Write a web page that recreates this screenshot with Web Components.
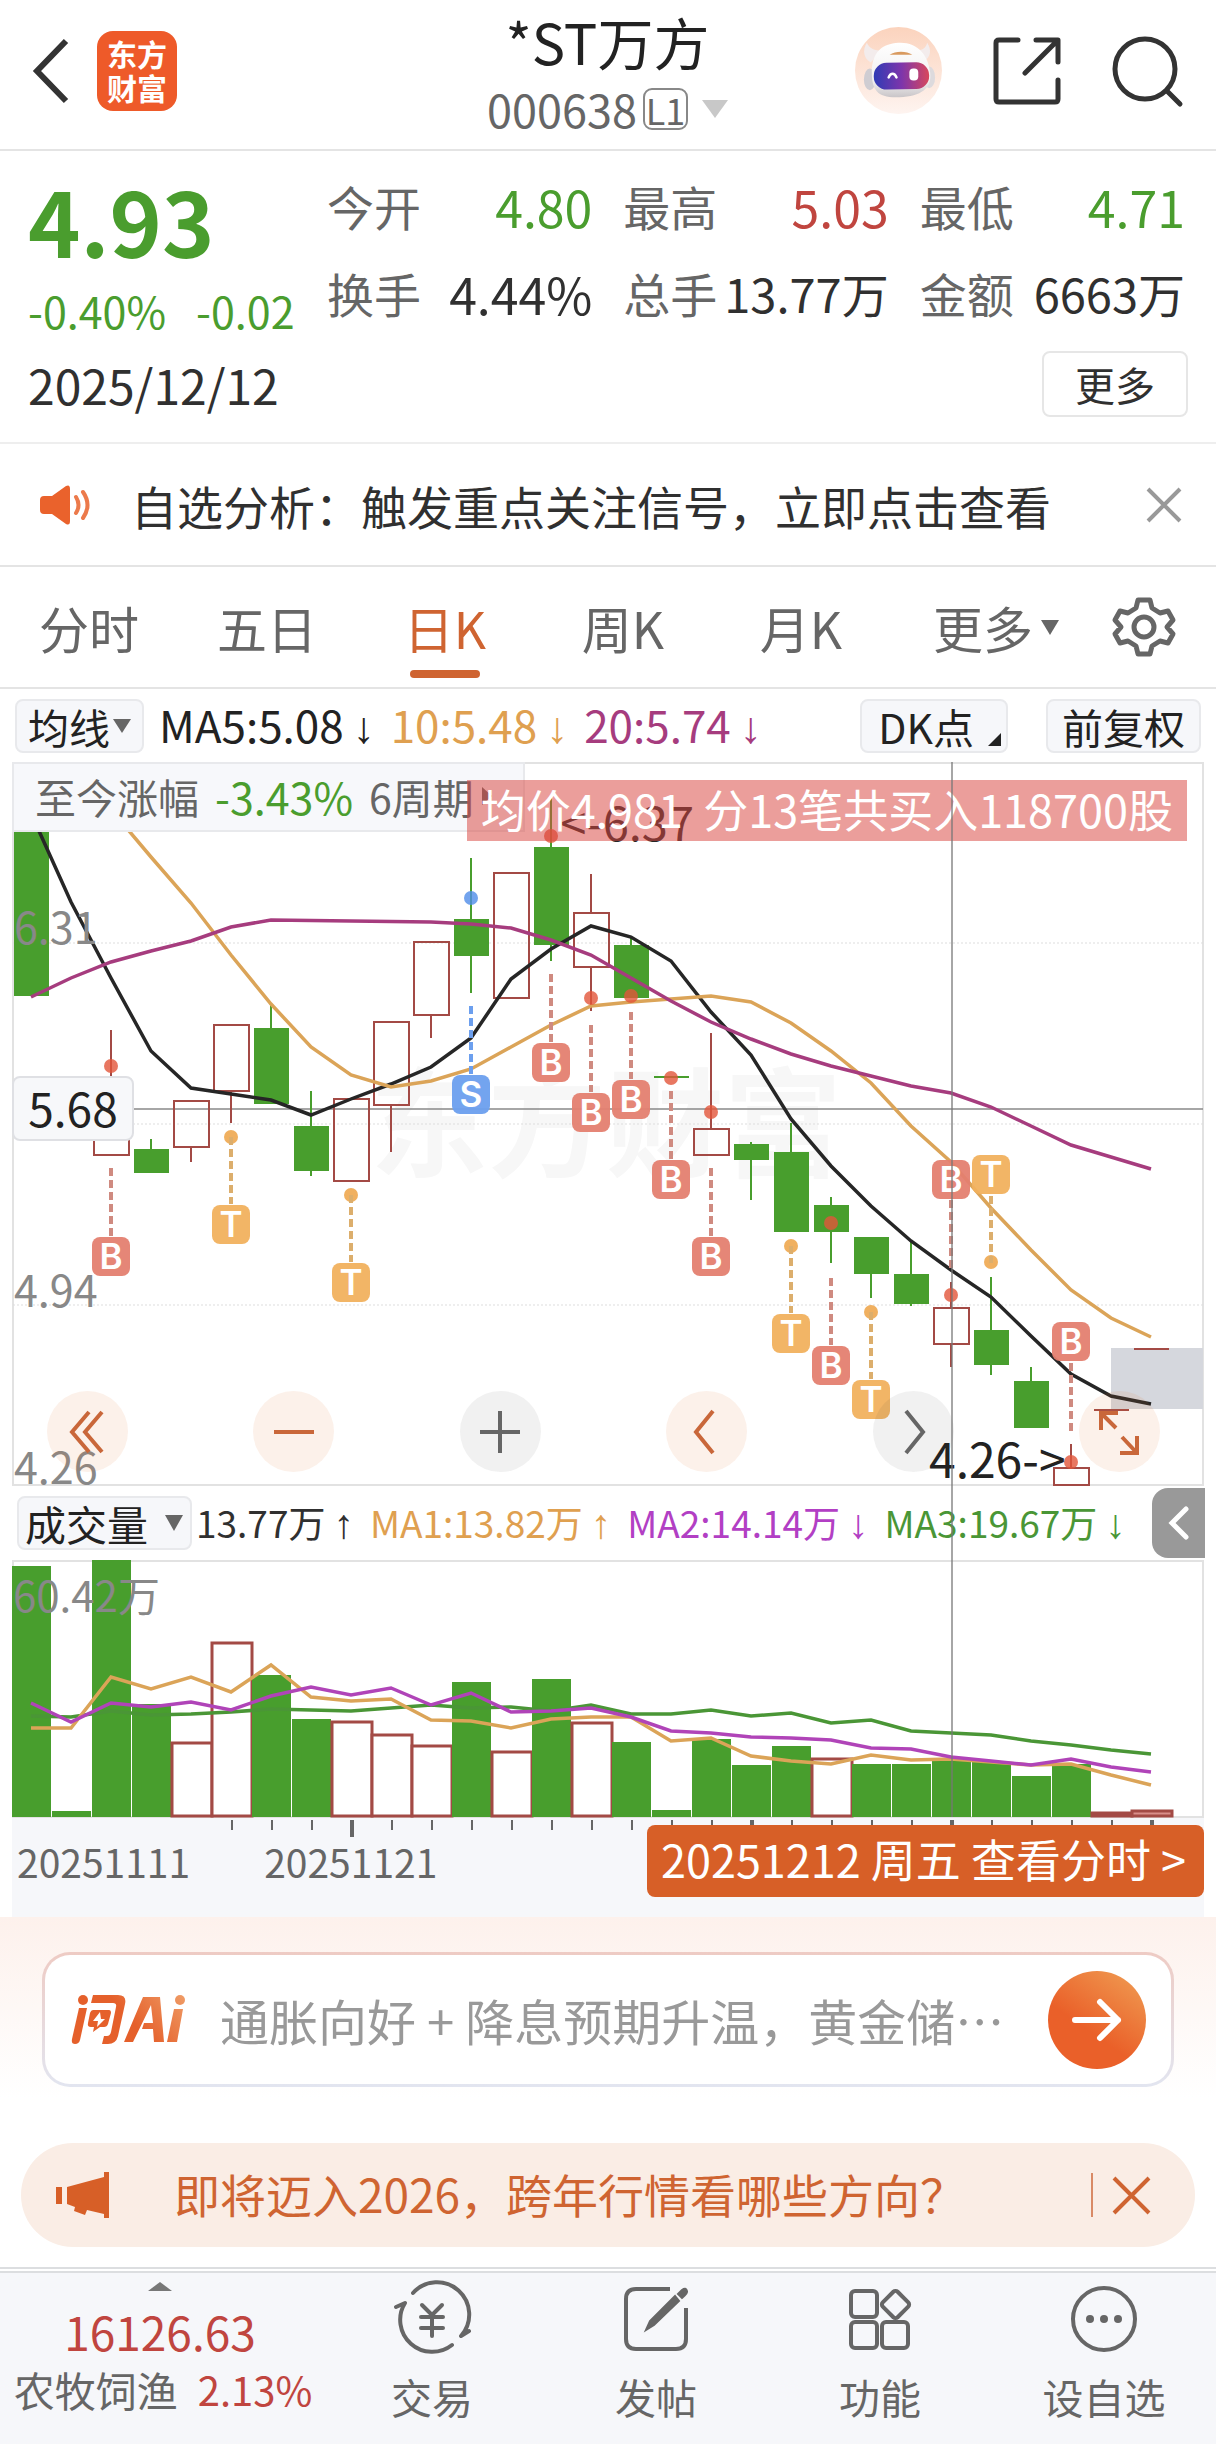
<!DOCTYPE html>
<html lang="zh-CN">
<head>
<meta charset="utf-8">
<meta name="viewport" content="width=device-width, initial-scale=1">
<title>*ST万方 000638</title>
<style>
  :root {
    --ink: #303030; --sub: #666; --up: #c0453f; --down: #4a9d2e; --brand: #cf6431;
    --ma10: #dfa050; --ma20: #a63c7e; --vol2: #b23fc4; --vol3: #4a9636;
    --line: #e4e4e4; --panel: #f6f7fa;
  }
  body { margin: 0; background: #fff; color: var(--ink); font-family: "Noto Sans CJK SC", sans-serif; }
</style>
</head>
<body>
<stock-app></stock-app>
<script>
const RESET = `
  :host, *, *::before, *::after { box-sizing: border-box; }
  :host { display: block; fill: none; stroke: currentColor; }
  button { font: inherit; color: inherit; background: none; border: 0; padding: 0; margin: 0; white-space: nowrap; }
  svg { display: block; overflow: visible; flex: none; }
  p, h1 { margin: 0; font-weight: 400; }
  .arr { font-family: "Liberation Sans", sans-serif; }
`;
const define = (name, css, html) => customElements.define(name, class extends HTMLElement {
  constructor() {
    super();
    const t = document.createElement('template');
    t.innerHTML = `<style>${RESET}${css}</style>${html}`;
    this.attachShadow({ mode: 'open' }).append(t.content.cloneNode(true));
  }
});

/* ---------- header ---------- */
define('app-header', `
  :host { border-bottom: 2px solid var(--line); }
  header { display: grid; grid-template-columns: 1fr auto 1fr; align-items: center; height: 149px; padding: 0 34px 8px 33px; }
  .left { display: flex; align-items: center; gap: 30px; }
  .right { display: flex; align-items: center; justify-content: flex-end; gap: 51px; }
  .logo { width: 80px; height: 80px; border-radius: 16px; background: #ee5a29; color: #fff; font-weight: 700;
    font-size: 30px; line-height: 34px; text-align: center; padding-top: 5px; }
  .mid { display: flex; flex-direction: column; align-items: center; gap: 16px; }
  h1 { font-size: 56px; line-height: 60px; color: #222; }
  .code { display: flex; align-items: center; gap: 6px; font-size: 45px; line-height: 44px; color: var(--sub); }
  .lv { border: 2px solid #888; border-radius: 9px; font-size: 36px; line-height: 38px; width: 45px; text-align: center; }
  .tri { margin-left: 8px; border: 13px solid transparent; border-top: 18px solid #c8c8c8; border-bottom: 0; }
`, `
  <header>
    <div class="left">
      <button aria-label="返回"><svg width="34" height="62" viewBox="0 0 34 62" stroke="#333" stroke-width="6"><path d="M33 1 4 31 33 61"/></svg></button>
      <div class="logo">东方<br>财富</div>
    </div>
    <div class="mid">
      <h1>*ST万方</h1>
      <div class="code"><span>000638</span><span class="lv">L1</span><i class="tri"></i></div>
    </div>
    <div class="right">
      <button aria-label="助手"><svg width="87" height="87" viewBox="0 0 88 88" stroke="none">
        <defs>
          <linearGradient id="bg" x2="0" y2="1"><stop offset="0" stop-color="#fbd3bd"/><stop offset="1" stop-color="#fef4f0"/></linearGradient>
          <linearGradient id="vi"><stop offset="0" stop-color="#2f3bb5"/><stop offset=".5" stop-color="#7d35ab"/><stop offset="1" stop-color="#d8475c"/></linearGradient>
          <linearGradient id="he" x2="0" y2="1"><stop offset="0" stop-color="#fff"/><stop offset=".7" stop-color="#f1efef"/><stop offset="1" stop-color="#c9c5c8"/></linearGradient>
        </defs>
        <circle cx="44" cy="44" r="44" fill="url(#bg)"/>
        <path d="M12 16c-5 8-3 16 4 20l10-12c-7 0-12-3-14-8ZM73 16c5 8 3 14-2 18L62 24c6 0 10-3 11-8Z" fill="#f3ecec"/>
        <ellipse cx="15" cy="53" rx="6" ry="11" fill="#cfcdd2"/><ellipse cx="75" cy="51" rx="6" ry="11" fill="#dddadd"/>
        <path d="M17 46c0-20 10-29 27-30 19-1 30 12 32 30 2 16-9 24-31 25S17 64 17 46Z" fill="url(#he)"/>
        <rect x="19" y="36" width="56" height="27" rx="13" fill="url(#vi)" transform="rotate(-1 47 50)"/>
        <path d="M35 28c6-4 17-4 23 0Z" fill="#d99a5f"/>
        <path d="M34 51c2-5 6-5 8 0" fill="none" stroke="#fff" stroke-width="2.5" stroke-linecap="round"/>
        <rect x="55" y="42" width="9" height="12" rx="4" fill="#fff"/>
      </svg></button>
      <button aria-label="分享"><svg width="68" height="68" viewBox="0 0 68 68" stroke="#333" stroke-width="5" stroke-linecap="round" stroke-linejoin="round"><path d="M25 3H6q-3 0-3 3v56q0 3 3 3h56q3 0 3-3V43M43 3h22v22M64 4 32 36"/></svg></button>
      <button aria-label="搜索"><svg width="70" height="70" viewBox="0 0 70 70" stroke="#333" stroke-width="5" stroke-linecap="round"><circle cx="33" cy="33" r="30"/><path d="M55 55 68 68"/></svg></button>
    </div>
  </header>`);

/* ---------- quote ---------- */
define('quote-item', `
  :host { display: flex; justify-content: space-between; align-items: center; font-size: 47px; line-height: 64px; white-space: nowrap; }
  :host([big]) .v { font-size: 50px; }
  .k { color: var(--sub); }
`, `<span class="k"><slot name="k"></slot></span><span class="v"><slot></slot></span>`);

define('quote-panel', `
  :host { border-bottom: 2px solid #eee; padding: 23px 31px 25px 28px; }
  .top { display: grid; grid-template-columns: 268px repeat(3, 1fr); column-gap: 31px; align-items: start; }
  .price { font-size: 89px; line-height: 92px; font-weight: 700; color: var(--down); }
  .chg { display: flex; gap: 30px; font-size: 43px; line-height: 64px; color: var(--down); white-space: nowrap; }
  .col { display: grid; row-gap: 23px; }
  .main { display: grid; row-gap: 12px; }
  .down { color: var(--down); } .up { color: var(--up); }
  .bot { display: flex; justify-content: space-between; align-items: center; margin-top: 9px; }
  .date { font-size: 48px; line-height: 66px; }
  .more { width: 146px; height: 66px; border: 2px solid #e6e6e6; border-radius: 8px; font-size: 40px; line-height: 58px; margin-right: -3px; }
`, `
  <div class="top">
    <div class="main"><div class="price">4.93</div><div class="chg"><span>-0.40%</span><span>-0.02</span></div></div>
    <div class="col"><quote-item big class="down"><span slot="k">今开</span>4.80</quote-item><quote-item big><span slot="k">换手</span>4.44%</quote-item></div>
    <div class="col"><quote-item big class="up"><span slot="k">最高</span>5.03</quote-item><quote-item><span slot="k">总手</span>13.77万</quote-item></div>
    <div class="col"><quote-item big class="down"><span slot="k">最低</span>4.71</quote-item><quote-item><span slot="k">金额</span>6663万</quote-item></div>
  </div>
  <div class="bot"><span class="date">2025/12/12</span><button class="more">更多</button></div>`);

/* ---------- signal notice ---------- */
define('signal-notice', `
  :host { display: flex; align-items: center; height: 123px; padding: 0 35px 0 40px; border-bottom: 2px solid var(--line); }
  p { flex: 1; margin-left: 39px; font-size: 46px; line-height: 60px; white-space: nowrap; }
`, `
  <svg width="52" height="42" viewBox="0 0 52 42"><path d="M4 12h8L26 2q4-2 4 3v32q0 5-4 3L12 30H4q-4 0-4-4V16q0-4 4-4Z" fill="#ea622c" stroke="none"/><path d="M36 13q5 8 0 16M43 8q9 13 0 26" stroke="#ec7a4b" stroke-width="4" stroke-linecap="round"/></svg>
  <p>自选分析：触发重点关注信号，立即点击查看</p>
  <button aria-label="关闭"><svg width="34" height="34" viewBox="0 0 34 34" stroke="#999" stroke-width="4"><path d="M1 1 33 33M33 1 1 33"/></svg></button>`);

/* ---------- period tabs ---------- */
define('period-tabs', `
  :host { border-bottom: 2px solid var(--line); }
  nav { display: grid; grid-template-columns: repeat(5, 178fr) 212fr 84fr; padding-right: 30px; height: 120px; color: var(--sub); }
  button { display: flex; align-items: center; justify-content: center; gap: 8px; font-size: 50px; line-height: 72px; position: relative; }
  .on { color: var(--brand); }
  .on::after { content: ""; position: absolute; left: 50%; margin-left: -35px; bottom: 9px; width: 70px; height: 8px; border-radius: 4px; background: var(--brand); }
  .tri { border: 9px solid transparent; border-top: 15px solid var(--sub); border-bottom: 0; }
`, `
  <nav>
    <button>分时</button><button>五日</button><button class="on">日K</button><button>周K</button><button>月K</button>
    <button>更多<i class="tri"></i></button>
    <button aria-label="设置"><svg width="60" height="60" viewBox="0 0 60 60" stroke-width="5" stroke-linejoin="round"><path d="M24 3h12l2 8 8 5 8-2 5 9-6 7 6 7-5 9-8-2-8 5-2 8H24l-2-8-8-5-8 2-5-9 6-7-6-7 5-9 8 2 8-5Z"/><circle cx="30" cy="30" r="10"/></svg></button>
  </nav>`);

/* ---------- moving average bar ---------- */
define('ma-bar', `
  :host { display: flex; align-items: center; height: 73px; padding: 0 15px; font-size: 41px; line-height: 52px; white-space: nowrap; color: #222; }
  .tag { display: flex; align-items: center; height: 54px; border: 2px solid #e8e9ec; border-radius: 8px; background: var(--panel); padding: 0 14px; position: relative; }
  .pick { padding: 0 11px; gap: 3px; }
  .tri { border: 9px solid transparent; border-top: 14px solid #666; border-bottom: 0; }
  .vals { flex: 1; display: flex; gap: 16px; margin-left: 15px; font-size: 44px; }
  .vals .arr { margin-left: 9px; }
  .dk { padding: 0 32px 0 16px; margin-right: 38px; }
  .dk::after { content: ""; position: absolute; right: 5px; bottom: 5px; border-left: 13px solid transparent; border-bottom: 13px solid #222; }
`, `
  <button class="tag pick">均线<i class="tri"></i></button>
  <div class="vals">
    <span>MA5:5.08<span class="arr">↓</span></span>
    <span style="color:var(--ma10)">10:5.48<span class="arr">↓</span></span>
    <span style="color:var(--ma20)">20:5.74<span class="arr">↓</span></span>
  </div>
  <button class="tag dk">DK点</button>
  <button class="tag">前复权</button>`);

/* ---------- chart data, in drawing units; one candle every 40 units ---------- */
const X0 = 31, STEP = 40, cx = i => X0 + STEP * i;
// [index, kind, high, bodyTop, bodyBottom, low]
const CANDLES = [
  [0,'g',800,800,996,996],[2,'r',1030,1100,1155,1155],[3,'g',1139,1149,1173,1173],[4,'r',1101,1101,1147,1162],
  [5,'r',1025,1025,1091,1123],[6,'g',1004,1028,1104,1104],[7,'g',1091,1126,1171,1176],[8,'r',1099,1099,1181,1181],
  [9,'r',1022,1022,1105,1152],[10,'r',942,942,1015,1038],[11,'g',858,919,956,993],[12,'r',873,873,998,998],
  [13,'g',795,847,945,961],[14,'r',874,913,967,1011],[15,'g',937,945,998,998],[16,'g',1078,1077,1079,1078],
  [17,'r',1033,1129,1155,1155],[18,'g',1142,1144,1160,1200],[19,'g',1123,1152,1232,1232],[20,'g',1197,1205,1232,1263],
  [21,'g',1237,1237,1274,1298],[22,'g',1240,1274,1304,1306],[23,'r',1282,1308,1344,1367],[24,'g',1277,1330,1365,1375],
  [25,'g',1367,1381,1428,1428],[26,'r',1444,1468,1485,1485],[27,'r',1410,1410,1410,1410],[28,'r',1349,1349,1349,1349]];
const MA = {
  '#262626': [[0,812],[.2,831],[1,902],[2,978],[3,1051],[4,1088],[5,1094],[6,1100],[7,1115],[8,1099],[9,1084],[10,1067],[11,1038],[12,979],[13,949],[14,926],[15,937],[16,961],[17,1012],[18,1055],[19,1119],[20,1166],[21,1206],[22,1241],[23,1270],[24,1297],[25,1336],[26,1374],[27,1396],[28,1404]],
  '#dba458': [[2,805],[2.45,831],[3,857],[4,903],[5,955],[6,1004],[7,1047],[8,1075],[9,1087],[10,1081],[11,1069],[12,1047],[13,1025],[14,1006],[15,1002],[16,999],[17,996],[18,1002],[19,1023],[20,1051],[21,1083],[22,1126],[23,1162],[24,1208],[25,1250],[26,1290],[27,1318],[28,1337]],
  '#a63c7e': [[0,997],[1,978],[2,962],[3,951],[4,941],[5,927],[6,920],[8,921],[10,922],[11,924],[12,928],[13,940],[14,955],[15,978],[16,1001],[17,1022],[18,1039],[19,1054],[20,1066],[21,1076],[22,1086],[23,1093],[24,1107],[25,1126],[26,1145],[27,1157],[28,1169]]
};
// [index, letter, dotY, dashFrom, dashTo, badgeTop]
const MARKS = [
  [2,'B',1066,1168,1236,1237],[5,'T',1137,1137,1204,1205],[8,'T',1195,1195,1262,1263],[11,'S',898,1006,1074,1075],
  [13,'B',836,974,1042,1043],[14,'B',998,1025,1092,1093],[15,'B',996,1012,1079,1080],[16,'B',1078,1091,1159,1160],
  [17,'B',1112,1168,1236,1237],[19,'T',1246,1246,1313,1314],[20,'B',1223,1278,1345,1346],[21,'T',1312,1312,1379,1380],
  [23,'B',1295,1200,1268,1160],[24,'T',1262,1196,1263,1155],[26,'B',1462,1363,1431,1322]];
const VOLUME = ['g1566','g1811','g1560','g1704','r1743','r1643','g1675','g1719','r1722','r1735','r1746','g1682','r1752','g1679','r1723','g1742','g1810','g1739','g1765','g1746','r1759','g1764','g1764','g1760','g1762','g1776','g1764','r1813','r1811'];
const VMA = {
  '#4a9636': [1716,1717,1711,1715,1714,1712,1709,1710,1711,1708,1705,1708,1707,1711,1705,1714,1714,1710,1716,1713,1723,1720,1731,1733,1735,1741,1745,1750,1754],
  '#dba458': [1728,1728,1677,1689,1677,1692,1665,1697,1701,1699,1720,1721,1728,1719,1717,1717,1741,1738,1756,1761,1764,1755,1760,1759,1762,1765,1764,1775,1785],
  '#b044b8': [1703,1722,1703,1707,1702,1710,1696,1687,1695,1688,1705,1693,1712,1711,1708,1717,1731,1733,1737,1738,1740,1748,1749,1757,1761,1765,1759,1767,1772]
};
const GREEN = '#489e2d', RED = '#a34a45';
const line = (pts, c) => `<polyline points="${pts.map(([i, y]) => `${cx(i)},${y}`).join(' ')}" stroke="${c}" stroke-width="3.5"/>`;
const candle = ([i, k, h, t, b, l]) => {
  const x = cx(i), c = k === 'g' ? GREEN : RED;
  const wick = (a, z) => z > a ? `<path d="M${x} ${a}V${z}" stroke="${c}" stroke-width="2"/>` : '';
  if (b - t < 4) return `<path d="M${x - 17} ${t}h35" stroke="${c}" stroke-width="2"/>`;
  const body = k === 'g' ? `<rect x="${x - 17}" y="${t}" width="35" height="${b - t}" fill="${c}" stroke="none"/>`
    : `<rect x="${x - 17}" y="${t}" width="35" height="${b - t}" stroke="${c}" stroke-width="2"/>`;
  return wick(h, t) + wick(b, l) + body;
};
const TONE = { B: ['#e2553a', '#e47f70', '#cf8a80'], T: ['#ec9c38', '#f1b15e', '#dcae6c'], S: ['#4f8ce8', '#6c9fee', '#6c9fee'] };
const mark = ([i, s, dot, a, z, top]) => {
  const x = cx(i), [d, b, l] = TONE[s];
  return `<circle cx="${x}" cy="${dot}" r="7" fill="${d}" stroke="none" opacity=".8"/>
    <path d="M${x} ${a}V${z}" stroke="${l}" stroke-width="4" stroke-dasharray="8 4"/>
    <rect x="${x - 19}" y="${top}" width="38" height="39" rx="8" fill="${b}" stroke="none" opacity=".95"/>
    <text x="${x}" y="${top + 32}" text-anchor="middle" font-size="35" font-weight="600" fill="#fff" font-family="Inter, sans-serif">${s}</text>`;
};
const volBar = (v, i) => {
  const y = +v.slice(1), x = 12 + STEP * i;
  return v[0] === 'g' ? `<rect x="${x}" y="${y}" width="39" height="${1817 - y}" fill="${GREEN}" stroke="none"/>`
    : `<rect x="${x}" y="${y}" width="40" height="${1816 - y}" fill="${i > 26 ? '#d98e8a' : '#fff'}" stroke="${RED}" stroke-width="3"/>`;
};
const ticks = Array.from({ length: 24 }, (_, n) => n + 5).map(i => {
  const major = i % 5 === 3;
  const end = i > 15 ? 1825 : i === 8 ? 1837 : 1830;
  return `<path d="M${cx(i) + 1} 1820V${end}" stroke="#666" stroke-width="${major && i !== 13 ? 4 : 2}"/>`;
}).join('');

define('k-line', `
  :host { position: relative; }
  svg { width: 100%; height: auto; }
  text { stroke: none; }
  .since { position: absolute; left: 0; top: 0; width: 43%; height: 70px; display: flex; align-items: center; gap: 16px; padding: 0 0 2px 21px;
    font-size: 41px; line-height: 56px; color: var(--sub); background: #f7f8fb; border: 2px solid #e8e9ec; white-space: nowrap; }
  .since b { font-weight: 400; font-size: 43px; color: var(--down); }
  .since i { margin-left: -8px; border: 9px solid transparent; border-left: 10px solid #666; border-right: 0; }
  .deal { position: absolute; right: 17px; top: 18px; height: 61px; padding: 0 14px; font-size: 45px; line-height: 58px; color: #fff; background: rgba(217, 72, 66, .53); white-space: pre; }
  .peak { position: absolute; left: 46%; top: 29px; font-size: 47px; line-height: 60px; color: #262626; }
  .cross { position: absolute; left: 0; top: 314px; width: 122px; height: 65px; border: 2px solid #dfe0e4; border-radius: 8px; background: #f7f8fa; color: #222; font-size: 46px; line-height: 58px; text-align: center; }
  .tools { position: absolute; left: 35px; right: 44px; bottom: 14px; display: flex; justify-content: space-between; }
  .tools button { width: 81px; height: 81px; border-radius: 50%; background: rgba(230, 115, 50, .1); color: #c9673a; display: flex; align-items: center; justify-content: center; }
  .tools .n { background: rgba(60, 60, 60, .07); color: #666; }
  .tools svg { width: 40px; height: 44px; stroke-width: 4; }
`, `
  <svg viewBox="12 762 1192 724" role="img" aria-label="日K线">
    <text x="370" y="1168" font-size="118" font-weight="700" fill="#f7f7f7">东方财富</text>
    <rect x="13" y="763" width="1190" height="722" stroke="#e2e2e2" stroke-width="2"/>
    <g stroke="#ddd" stroke-width="1" stroke-dasharray="2 2"><path d="M13 943H1203M13 1124H1203M13 1305H1203"/></g>
    <path d="M13 1109H1203" stroke="#888" stroke-width="1.500"/>
    <rect x="1111" y="1348" width="92" height="61" fill="#d5d7dd" stroke="none"/>
    ${CANDLES.map(candle).join('')}
    ${Object.entries(MA).map(([c, p]) => line(p, c)).join('')}
    ${MARKS.map(mark).join('')}
    <g font-size="43" fill="#888"><text x="14" y="944">6.31</text><text x="14" y="1307">4.94</text><text x="14" y="1484">4.26</text></g>
    <text x="929" y="1478" font-size="48" fill="#222">4.26-&gt;</text>
  </svg>
  <div class="since"><span>至今涨幅</span><b>-3.43%</b><span>6周期</span><i></i></div>
  <div class="peak">&lt;-6.37</div>
  <div class="cross">5.68</div>
  <div class="tools">
    <button aria-label="最早"><svg viewBox="0 0 40 44"><path d="M21 2 4 22 21 42M34 2 17 22 34 42"/></svg></button>
    <button aria-label="缩小"><svg viewBox="0 0 40 44"><path d="M0 22H40"/></svg></button>
    <button class="n" aria-label="放大"><svg viewBox="0 0 40 44"><path d="M0 22H40M20 1V43"/></svg></button>
    <button aria-label="向前"><svg viewBox="0 0 40 44"><path d="M26 1 9 22 26 43"/></svg></button>
    <button class="n" aria-label="向后"><svg viewBox="0 0 40 44"><path d="M13 1 30 22 13 43"/></svg></button>
    <button aria-label="全屏"><svg viewBox="0 0 40 44"><path d="M2 20V3H19M3 4 17 18M38 26V43H21M37 42 23 27"/></svg></button>
  </div>
  <div class="deal">均价4.981  分13笔共买入118700股</div>`);

define('vol-bar', `
  :host { display: flex; align-items: center; height: 74px; position: relative; padding-left: 5px; font-size: 37px; line-height: 52px; white-space: nowrap; }
  .pick { display: flex; align-items: center; gap: 17px; height: 54px; padding: 0 7px 0 6px; border: 2px solid #e8e9ec; border-radius: 8px; background: var(--panel); color: #222; font-size: 41px; }
  .tri { border: 9px solid transparent; border-top: 16px solid #666; border-bottom: 0; }
  .vals { display: flex; gap: 16px; margin-left: 4px; }
  .arr { margin-left: 8px; font-size: 41px; }
  .open { position: absolute; right: -1px; top: 2px; width: 53px; height: 70px; border-radius: 16px 0 0 16px; background: #999; display: flex; align-items: center; justify-content: center; }
`, `
  <button class="pick">成交量<i class="tri"></i></button>
  <div class="vals">
    <span>13.77万<span class="arr">↑</span></span>
    <span style="color:var(--ma10)">MA1:13.82万<span class="arr">↑</span></span>
    <span style="color:var(--vol2)">MA2:14.14万<span class="arr">↓</span></span>
    <span style="color:var(--vol3)">MA3:19.67万<span class="arr">↓</span></span>
  </div>
  <button class="open" aria-label="展开"><svg width="20" height="34" viewBox="0 0 20 34" stroke="#fff" stroke-width="5" stroke-linecap="round"><path d="M17 3 3 17 17 31"/></svg></button>`);

define('vol-chart', `
  svg { width: 100%; height: auto; }
  text { stroke: none; }
  .foot { display: flex; align-items: center; justify-content: space-between; gap: 12px; height: 80px; padding-bottom: 8px; background: var(--panel); }
  .dates { display: flex; gap: 74px; padding-left: 5px; font-size: 39px; line-height: 52px; color: var(--sub); }
  .go { height: 72px; padding: 0 14px 4px; border-radius: 8px; background: #d75f27; color: #fff; font-size: 45px; line-height: 64px; }
  .go::after { content: ""; padding-left: 4px; }
`, `
  <svg viewBox="12 1560 1192 265" role="img" aria-label="成交量">
    <rect x="12" y="1817" width="1192" height="8" fill="#f6f7fa" stroke="none"/>
    <rect x="13" y="1561" width="1190" height="256" stroke="#e2e2e2" stroke-width="2"/>
    ${VOLUME.map(volBar).join('')}
    ${Object.entries(VMA).map(([c, p]) => line(p.map((y, i) => [i, y]), c)).join('')}
    <text x="13" y="1612" font-size="42" fill="#888">60.42万</text>
    ${ticks}
  </svg>
  <div class="foot">
    <div class="dates"><span>20251111</span><span>20251121</span></div>
    <button class="go">20251212 周五 查看分时 &gt;</button>
  </div>`);

define('stock-chart', `
  :host { padding: 0 12px; }
  .frame { position: relative; }
  .v { position: absolute; top: 0; bottom: 88px; left: 78.8%; width: 2px; background: #777; opacity: .65; }
  .pad { height: 12px; background: var(--panel); }
`, `<div class="frame"><k-line></k-line><vol-bar></vol-bar><vol-chart></vol-chart><div class="v"></div></div><div class="pad"></div>`);

/* ---------- ask AI ---------- */
define('ask-ai', `
  :host { padding: 35px 42px 56px; background: linear-gradient(#fdf1ec, #fff 80%); }
  .box { display: flex; align-items: center; height: 135px; padding: 0 25px 0 26px; border: 3px solid transparent; border-radius: 28px;
    background: linear-gradient(#fff, #fff) padding-box, linear-gradient(#eecbc4, #e2e5f0) border-box; }
  input { flex: 1; min-width: 0; margin-left: 33px; border: 0; outline: 0; background: none; font: inherit; font-size: 49px; line-height: 64px; height: 70px; padding: 0; }
  input::placeholder { color: #999; opacity: 1; }
  .go { width: 98px; height: 98px; border-radius: 50%; background: linear-gradient(215deg, #f0a055, #ea6029 60%); display: flex; align-items: center; justify-content: center; }
`, `
  <div class="box">
    <svg width="116" height="56" viewBox="0 0 116 56" role="img" aria-label="问Ai" stroke="none">
      <defs><linearGradient id="a" gradientUnits="userSpaceOnUse" x1="70" y1="40" x2="116" y2="0"><stop offset="0" stop-color="#e5602b"/><stop offset="1" stop-color="#f0a06a"/></linearGradient></defs>
      <g fill="url(#a)">
        <circle cx="12" cy="8" r="5"/><path d="M8 16h8L9 48q-1 4-5 4-4 0-3-5Z"/>
        <path d="M22 3h25q9 0 7 9l-7 32q-2 8-10 8h-6l2-8h3q3 0 4-4l5-25q1-4-3-4H20Z"/>
        <path d="M21 18h17q2 0 2 3l-3 11q-1 3-4 3h-4l-7 5 1-5h-3q-4 0-3-4l2-10q1-3 3-3Zm8 2-7 9h5l-1 6 8-8h-4Z" fill-rule="evenodd"/>
        <path d="M72 5h17l4 45H83l-1-13H71l2-6h9l-2-18L62 50H53Z"/>
        <circle cx="109" cy="8" r="5"/><path d="M103 17h9l-6 33H96Z"/>
      </g>
    </svg>
    <input type="text" aria-label="问Ai" placeholder="通胀向好 + 降息预期升温，黄金储⋯">
    <button class="go" aria-label="提问"><svg width="48" height="42" viewBox="0 0 48 42" stroke="#fff" stroke-width="6" stroke-linecap="round" stroke-linejoin="round"><path d="M2 21H45M27 3 45 21 27 39"/></svg></button>
  </div>`);

/* ---------- promo pill ---------- */
define('promo-pill', `
  :host { padding: 0 21px 20px; }
  .pill { display: flex; align-items: center; height: 104px; padding: 0 45px 0 35px; border-radius: 52px; background: #faede5; color: var(--brand); }
  a { flex: 1; margin-left: 65px; color: inherit; text-decoration: none; font-size: 46px; line-height: 60px; padding-bottom: 4px; white-space: nowrap; }
  .sep { width: 2px; height: 44px; background: #d98a66; margin-right: 20px; }
`, `
  <div class="pill">
    <svg width="53" height="46" viewBox="0 0 53 46" stroke="none" fill="#d75f27"><path d="M0 15h6v17H0ZM11 15 48 5V0h5v46h-5v-4l-17-4-2 5-11-4 1-4-8-3Z"/></svg>
    <a href="#">即将迈入2026，跨年行情看哪些方向？</a>
    <i class="sep"></i>
    <button aria-label="关闭"><svg width="37" height="37" viewBox="0 0 37 37" stroke-width="4"><path d="M1 1 36 36M36 1 1 36"/></svg></button>
  </div>`);

/* ---------- bottom bar ---------- */
define('nav-item', `
  :host { color: var(--sub); }
  button { display: flex; flex-direction: column; align-items: center; gap: 15px; width: 100%; padding-top: 10px; font-size: 41px; line-height: 52px; }
  ::slotted(svg) { display: block; overflow: visible; stroke-width: 4; }
`, `<button><slot name="icon"></slot><span><slot></slot></span></button>`);

define('bottom-bar', `
  :host { border-top: 2px solid #dcdee0; padding-top: 2px; background: #fff; }
  nav { display: grid; grid-template-columns: 320fr repeat(4, 224fr); border-top: 2px solid #dcdee0; background: var(--panel); min-height: 173px; }
  .idx { display: flex; flex-direction: column; align-items: center; padding-top: 9px; color: var(--up); }
  .tri { border: 12px solid transparent; border-bottom: 9px solid #777; border-top: 0; }
  .num { font-size: 46px; line-height: 60px; margin-top: 10px; }
  .row { display: flex; gap: 20px; padding-left: 6px; font-size: 40px; line-height: 56px; white-space: nowrap; }
  .row span:first-child { color: var(--sub); font-size: 41px; }
`, `
  <nav>
    <button class="idx"><i class="tri"></i><span class="num">16126.63</span><span class="row"><span>农牧饲渔</span><span>2.13%</span></span></button>
    <nav-item><svg slot="icon" width="72" height="72" viewBox="0 0 72 72" stroke-linecap="round" stroke-linejoin="round"><path d="M17 10A32 32 0 0 1 65 53L73 48M56 62A32 32 0 0 1 9 20L0 24"/><path d="M26 22 36 32 46 22M36 32V53M25 34H47M25 45H47"/></svg>交易</nav-item>
    <nav-item><svg slot="icon" width="72" height="72" viewBox="0 0 72 72"><path d="M50 6H16Q6 6 6 16V56Q6 66 16 66H56Q66 66 66 56V25"/><path d="M26 47 30 38 55 13 59 18 34 42ZM58 11 62 7Q66 4 67 8 68 10 62 15Z" fill="currentColor" stroke-width="2"/></svg>发帖</nav-item>
    <nav-item><svg slot="icon" width="72" height="72" viewBox="0 0 72 72"><rect x="7" y="8" width="26" height="26" rx="4"/><rect x="7" y="39" width="26" height="26" rx="4"/><rect x="38" y="39" width="26" height="26" rx="4"/><rect x="41" y="11" width="21" height="21" rx="3" transform="rotate(45 51.500 21.500)"/></svg>功能</nav-item>
    <nav-item><svg slot="icon" width="72" height="72" viewBox="0 0 72 72"><circle cx="36" cy="36" r="31"/><g fill="currentColor" stroke="none"><circle cx="22" cy="36" r="4"/><circle cx="36" cy="36" r="4"/><circle cx="50" cy="36" r="4"/></g></svg>设自选</nav-item>
  </nav>`);

define('stock-app', ``, `
  <app-header></app-header>
  <main>
    <quote-panel></quote-panel>
    <signal-notice></signal-notice>
    <period-tabs></period-tabs>
    <ma-bar></ma-bar>
    <stock-chart></stock-chart>
    <ask-ai></ask-ai>
    <promo-pill></promo-pill>
  </main>
  <bottom-bar></bottom-bar>`);
</script>
</body>
</html>
